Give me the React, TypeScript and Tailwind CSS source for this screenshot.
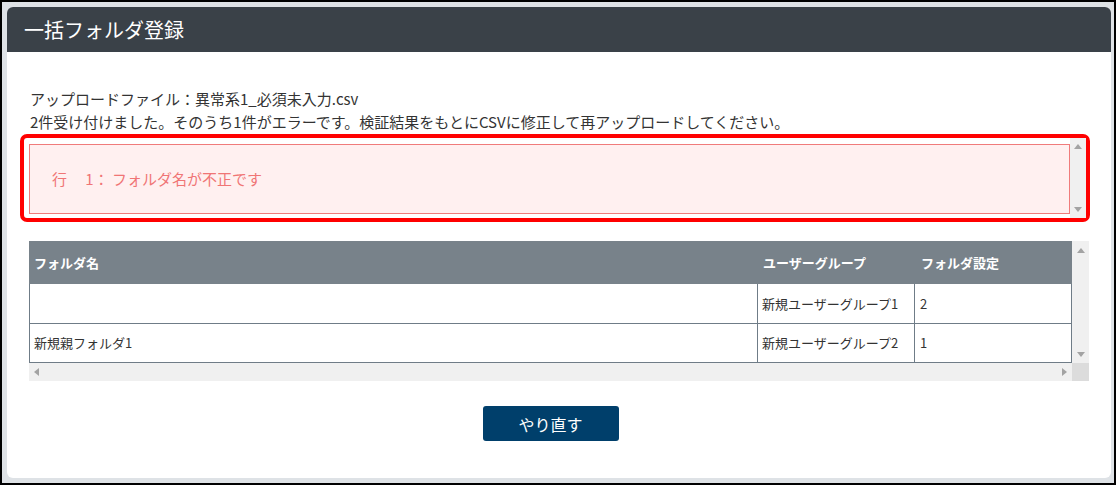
const font = { fontFamily: '"Noto Sans CJK JP", "Noto Sans", sans-serif' };

const rows = [
  { name: "", group: "新規ユーザーグループ1", setting: "2" },
  { name: "新規親フォルダ1", group: "新規ユーザーグループ2", setting: "1" },
];

function Arrow({ dir }: { dir: "up" | "down" | "left" | "right" }) {
  const pts = {
    up: "0,5 4,0 8,5",
    down: "0,0 8,0 4,5",
    left: "5,0 5,8 0,4",
    right: "0,0 0,8 5,4",
  }[dir];
  const vertical = dir === "up" || dir === "down";
  return (
    <svg width={vertical ? 8 : 5} height={vertical ? 5 : 8} viewBox={vertical ? "0 0 8 5" : "0 0 5 8"}>
      <polygon points={pts} fill="#a3a3a3" />
    </svg>
  );
}

export default function App() {
  return (
    <div
      className="w-[1116px] h-[485px] border-2 border-black bg-[#dee2e6] pl-[5px] pt-[5px] pr-[3px] pb-[5px]"
      style={font}
    >
      <div className="h-full bg-white rounded-[6px] overflow-hidden flex flex-col">
        {/* タイトル */}
        <div className="h-[45px] shrink-0 bg-[#3a4148] flex items-center pl-[17px] text-white text-[20px]">
          一括フォルダ登録
        </div>

        <div className="pl-[13px] pr-[21px] pt-[35px] flex flex-col">
          <div className="pl-[10px] text-[15px] leading-[23px] text-[#333]">
            <p>アップロードファイル：異常系1_必須未入力.csv</p>
            <p>2件受け付けました。そのうち1件がエラーです。検証結果をもとにCSVに修正して再アップロードしてください。</p>
          </div>

          {/* エラー表示 */}
          <div className="mt-[1px] h-[88px] border-[4px] border-[#ff0000] rounded-[7px] flex">
            <div className="flex-1 pl-[5px] pt-[6px] pb-[4px] flex">
              <div className="flex-1 border border-[#f07b7b] bg-[#fff0f0] flex items-center pl-[22px] text-[15px] text-[#f07575] whitespace-pre">
                {"行\u3000 1： フォルダ名が不正です"}
              </div>
            </div>
            <div className="w-[16px] bg-[#f0f0f0] flex flex-col items-center justify-between py-[6px]">
              <Arrow dir="up" />
              <Arrow dir="down" />
            </div>
          </div>

          {/* テーブル */}
          <div className="mt-[19px] ml-[9px] mr-[1px] flex flex-col">
            <div className="flex">
              <div className="flex-1 text-[13px]">
                <div className="h-[43px] bg-[#78828a] grid grid-cols-[729px_157px_1fr] items-center text-white font-bold">
                  <div className="pl-[5px]">フォルダ名</div>
                  <div className="pl-[5px]">ユーザーグループ</div>
                  <div className="pl-[6px]">フォルダ設定</div>
                </div>
                <div className="border-l border-r border-b border-[#6f7c87]">
                  {rows.map((r, i) => (
                    <div
                      key={i}
                      className={`h-[39px] grid grid-cols-[728px_157px_1fr] text-[#333] ${i > 0 ? "border-t border-[#6f7c87]" : ""}`}
                    >
                      <div className="pl-[4px] flex items-center border-r border-[#6f7c87]">{r.name}</div>
                      <div className="pl-[4px] flex items-center border-r border-[#6f7c87]">{r.group}</div>
                      <div className="pl-[5px] flex items-center">{r.setting}</div>
                    </div>
                  ))}
                </div>
              </div>
              <div className="w-[17px] bg-[#f0f0f0] flex flex-col items-center justify-between pt-[7px] pb-[6px]">
                <Arrow dir="up" />
                <Arrow dir="down" />
              </div>
            </div>
            <div className="flex h-[18px]">
              <div className="flex-1 bg-[#f0f0f0] flex items-center justify-between px-[5px]">
                <Arrow dir="left" />
                <Arrow dir="right" />
              </div>
              <div className="w-[17px] bg-[#dcdcdc]" />
            </div>
          </div>

          <div className="ml-[9px] mr-[18px] mt-[25px] flex justify-center">
            <button className="w-[136px] h-[35px] rounded-[3px] bg-[#003f6b] text-white text-[16px]">
              やり直す
            </button>
          </div>
        </div>
      </div>
    </div>
  );
}
